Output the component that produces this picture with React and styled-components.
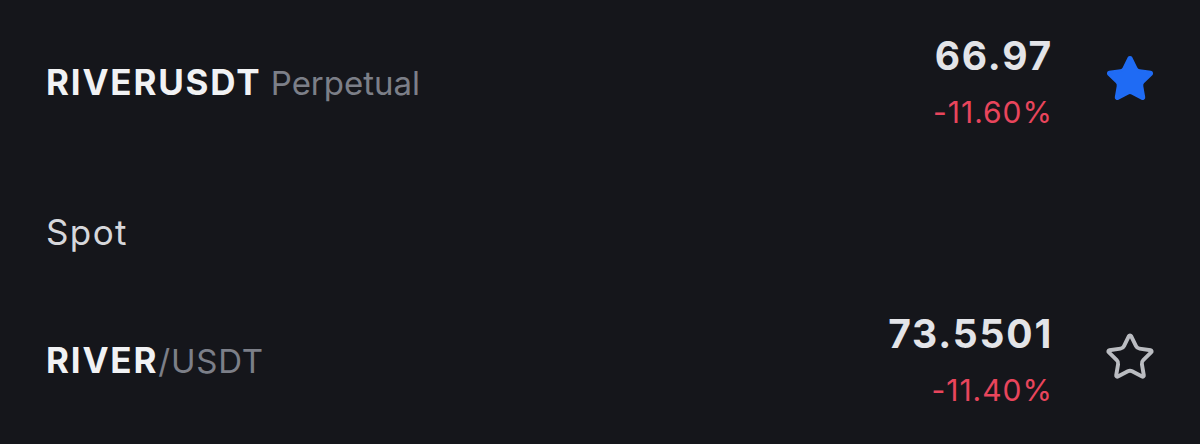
import React from 'react'
import styled, { createGlobalStyle } from 'styled-components'
import { Star } from 'lucide-react'

const GlobalStyle = createGlobalStyle`
    html, body {
        margin: 0;
        padding: 0;
        background: #15161b;
    }
    body {
        font-family: Inter, "Noto Sans", "Liberation Sans", sans-serif;
        -webkit-font-smoothing: antialiased;
    }
`

const rows = {
    perp: { base: 'RIVERUSDT', quote: ' Perpetual', price: '66.97', change: '-11.60%', fav: true },
    spot: { base: 'RIVER', quote: '/USDT', price: '73.5501', change: '-11.40%', fav: false },
}

const MarketRow = ({ item, height }) => (
    <Row $height={height}>
        <Symbol>
            <Base>{item.base}</Base>
            <Quote $tight={!item.quote.startsWith('/')}>{item.quote}</Quote>
        </Symbol>
        <PriceBlock>
            <Price>{item.price}</Price>
            <Change>{item.change}</Change>
        </PriceBlock>
        <FavButton>
            {item.fav
                ? <Star size={52} color='#1f6bf4' fill='#1f6bf4' strokeWidth={1.3} />
                : <Star size={52} color='#babcc1' strokeWidth={1.8} />}
        </FavButton>
    </Row>
)

const App = () => {
    return (
        <Container>
            <GlobalStyle />
            <MarketRow item={rows.perp} height={164} />
            <SectionTitle>Spot</SectionTitle>
            <MarketRow item={rows.spot} height={120} />
        </Container>
    )
}

export default App

const Container = styled.div`
    display: flex;
    flex-direction: column;
    width: 1200px;
    height: 444px;
    background: #15161b;
    overflow: hidden;
`

const Row = styled.div`
    display: flex;
    align-items: center;
    height: ${p => p.$height}px;
    padding: 0 44px 0 46px;
    box-sizing: border-box;
`

const Symbol = styled.div`
    display: flex;
    align-items: baseline;
    flex: 1;
    white-space: pre;
`

const Base = styled.span`
    font-size: 35px;
    font-weight: 700;
    letter-spacing: 1.8px;
    color: #f1f2f4;
`

const Quote = styled.span`
    font-size: 33px;
    font-weight: 400;
    letter-spacing: ${p => p.$tight ? '0px' : '0.8px'};
    color: #7c7f88;
`

const PriceBlock = styled.div`
    display: flex;
    flex-direction: column;
    align-items: flex-end;
    gap: 22px;
    margin-right: 51px;
`

const Price = styled.div`
    font-size: 39px;
    line-height: 38px;
    font-weight: 700;
    letter-spacing: 1.8px;
    color: #e3e4e8;
`

const Change = styled.div`
    font-size: 30px;
    line-height: 30px;
    font-weight: 400;
    letter-spacing: 1px;
    color: #e8455c;
`

const FavButton = styled.div`
    display: flex;
    align-items: center;
    justify-content: center;
    width: 52px;
    height: 52px;
    margin-top: -6px;
`

const SectionTitle = styled.div`
    display: flex;
    align-items: center;
    height: 136px;
    padding-left: 46px;
    font-size: 35px;
    font-weight: 400;
    letter-spacing: 1.4px;
    color: #d6d7db;
`
